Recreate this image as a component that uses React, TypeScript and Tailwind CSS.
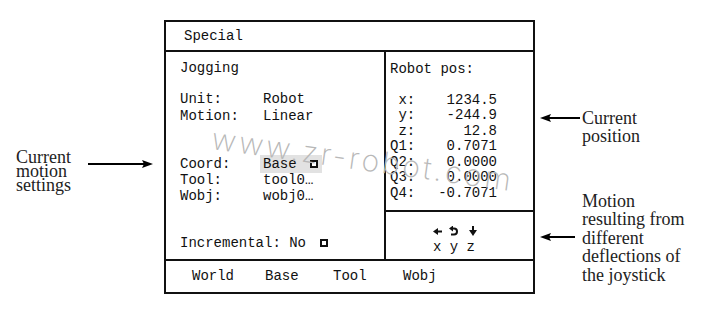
const mono = { fontFamily: '"Liberation Mono", "DejaVu Sans Mono", monospace' };

const position = [
  [" x:", "1234.5"],
  [" y:", "-244.9"],
  [" z:", "12.8"],
  ["Q1:", "0.7071"],
  ["Q2:", "0.0000"],
  ["Q3:", "0.0000"],
  ["Q4:", "-0.7071"],
];

const softkeys = [
  { label: "World", w: "w-[73px]" },
  { label: "Base", w: "w-[68px]" },
  { label: "Tool", w: "w-[70px]" },
  { label: "Wobj", w: "w-[60px]" },
];

function ArrowRight() {
  return (
    <svg width="65" height="10" viewBox="0 0 65 10" className="mt-[9.5px] shrink-0">
      <line x1="0" y1="5" x2="57" y2="5" stroke="#000" strokeWidth="2" />
      <polygon points="65,5 54,1 56,5 54,9" fill="#000" />
    </svg>
  );
}

function ArrowLeft({ width, className }: { width: number; className: string }) {
  return (
    <svg width={width} height="10" viewBox={`0 0 ${width} 10`} className={className}>
      <line x1="8" y1="5" x2={width} y2="5" stroke="#000" strokeWidth="2" />
      <polygon points="0,5 11,1 9,5 11,9" fill="#000" />
    </svg>
  );
}

function Check() {
  return <span className="inline-block h-[8px] w-[8px] border-2 border-[#111] bg-white" />;
}

export default function App() {
  return (
    <div className="relative flex h-[322px] w-[718px] overflow-hidden bg-white text-black">
      {/* left annotation */}
      <div className="flex w-[164px] shrink-0 items-start pl-[16px] pt-[149.5px]">
        <div
          className="w-[72px] text-[18px] leading-[14px] text-[#222]"
          style={{ fontFamily: '"Liberation Serif", serif' }}
        >
          Current
          <br />
          motion
          <br />
          settings
        </div>
        <ArrowRight />
      </div>

      {/* flexpendant screen */}
      <div
        className="mt-[20px] flex h-[274px] w-[371px] shrink-0 flex-col border-2 border-[#111] text-[14px] leading-[16px] text-[#111]"
        style={mono}
      >
        <div className="h-[30px] border-b-2 border-[#111] pl-[18px] pt-[6px]">Special</div>

        <div className="flex h-[207px]">
          <div className="flex w-[220px] flex-col border-r-2 border-[#111] pl-[14px] pt-[8px]">
            <div>Jogging</div>
            <div className="mt-[15px] leading-[17px]">
              <div className="flex">
                <span className="w-[83px]">Unit:</span>
                <span>Robot</span>
              </div>
              <div className="flex">
                <span className="w-[83px]">Motion:</span>
                <span>Linear</span>
              </div>
            </div>
            <div className="mt-[31px]">
              <div className="flex">
                <span className="w-[80px]">Coord:</span>
                <span className="-my-[1px] flex h-[18px] w-[62px] items-center bg-[#e2e2e2] pl-[3px]">
                  Base
                  <span className="ml-[13px] flex">
                    <Check />
                  </span>
                </span>
              </div>
              <div className="flex">
                <span className="w-[83px]">Tool:</span>
                <span>tool0…</span>
              </div>
              <div className="flex">
                <span className="w-[83px]">Wobj:</span>
                <span>wobj0…</span>
              </div>
            </div>
            <div className="mt-[31px] flex items-center">
              <span>Incremental: No</span>
              <span className="ml-[14px] flex">
                <Check />
              </span>
            </div>
          </div>

          <div className="flex flex-1 flex-col">
            <div className="h-[160px] border-b-2 border-[#111] pl-[4px] pt-[9px]">
              <div>Robot pos:</div>
              <div className="mt-[15.5px] leading-[15.5px]">
                {position.map(([k, v]) => (
                  <div key={k} className="flex">
                    <span className="w-[25px] whitespace-pre">{k}</span>
                    <span className="w-[82px] text-right">{v}</span>
                  </div>
                ))}
              </div>
            </div>
            <div className="flex-1 pl-[47px] pt-[14px]">
              <div className="flex h-[10px] items-center">
                <svg width="9" height="7" viewBox="0 0 9 7">
                  <polygon points="0,3.5 5,0 5,7" fill="#111" />
                  <line x1="3" y1="3.5" x2="9" y2="3.5" stroke="#111" strokeWidth="2" />
                </svg>
                <svg width="9" height="10" viewBox="0 0 9 10" className="ml-[7px]">
                  <polygon points="0,2.5 4,-0.5 4,5.5" fill="#111" />
                  <path d="M3 2.5 H5 A3 3 0 0 1 5 8.5 H2" fill="none" stroke="#111" strokeWidth="2" />
                </svg>
                <svg width="8" height="10" viewBox="0 0 8 10" className="ml-[11px]">
                  <line x1="4" y1="0" x2="4" y2="5" stroke="#111" strokeWidth="2" />
                  <polygon points="0,4 8,4 4,10" fill="#111" />
                </svg>
              </div>
              <div className="mt-[3px] whitespace-pre">x y z</div>
            </div>
          </div>
        </div>

        <div className="flex h-[33px] border-t-2 border-[#111] pl-[26px] pt-[7px]">
          {softkeys.map((k) => (
            <span key={k.label} className={k.w}>
              {k.label}
            </span>
          ))}
        </div>
      </div>

      {/* right annotations */}
      <div
        className="ml-[5px] flex flex-col pt-[108.5px] text-[18px] text-[#222]"
        style={{ fontFamily: '"Liberation Serif", serif' }}
      >
        <div className="flex items-start">
          <ArrowLeft width={40} className="mt-[4.5px] shrink-0" />
          <div className="ml-[2px] leading-[18px]">
            Current
            <br />
            position
          </div>
        </div>
        <div className="mt-[47px] flex items-start">
          <ArrowLeft width={35} className="mt-[40.4px] shrink-0" />
          <div className="ml-[7px] leading-[18.5px]">
            Motion
            <br />
            resulting from
            <br />
            different
            <br />
            deflections of
            <br />
            the joystick
          </div>
        </div>
      </div>

      {/* watermark */}
      <div
        className="pointer-events-none absolute left-[212px] top-[116px] origin-left rotate-[8deg] text-[30px] font-extralight tracking-[3px] text-[#b8b8b8]"
        style={{ fontFamily: "Inter, sans-serif" }}
      >
        www.zr-robot.com
      </div>
    </div>
  );
}
